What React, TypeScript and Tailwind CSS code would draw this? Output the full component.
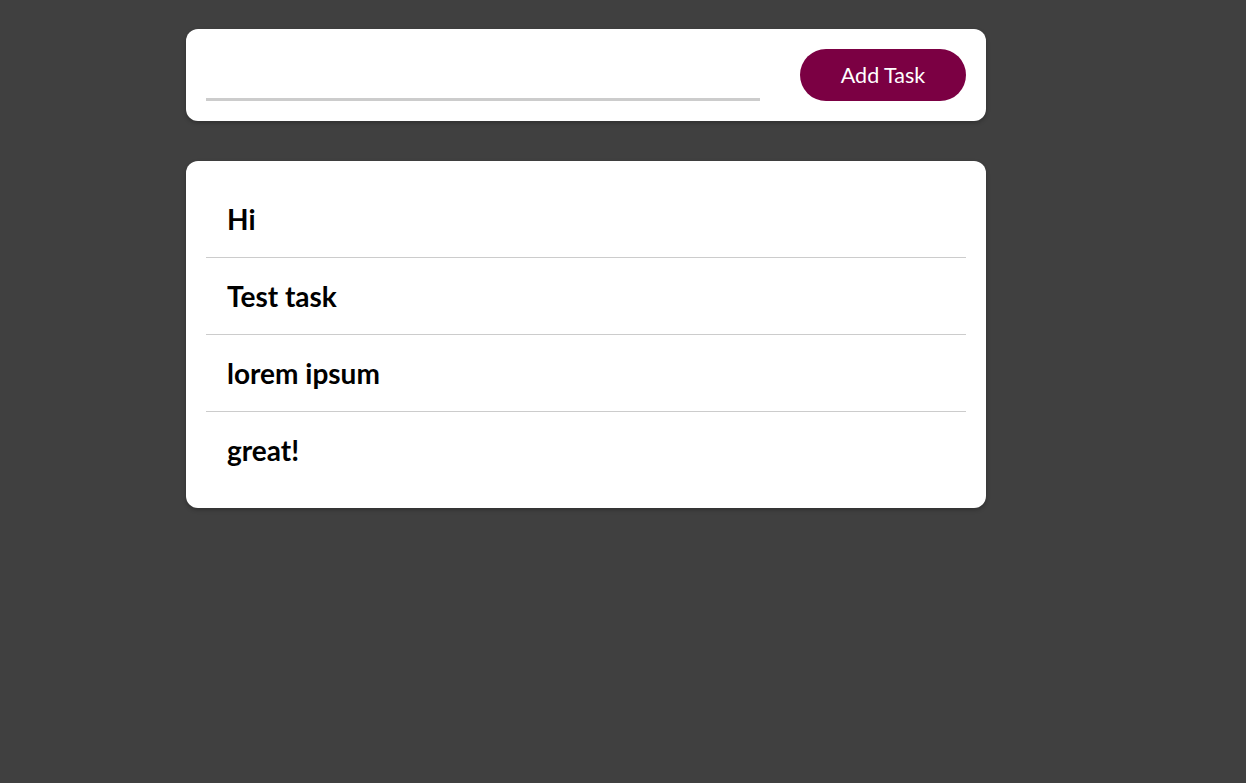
export default function App() {
    const tasks = ["Hi", "Test task", "lorem ipsum", "great!"];

    return (
        <div
            className="min-h-[783px] w-full bg-[#404040] pt-[29px]"
            style={{ fontFamily: "Lato, 'Noto Sans', sans-serif" }}
        >
            <div className="mx-auto w-[800px] -translate-x-[37px]">

                <div className="flex items-center justify-between rounded-xl bg-white p-5 shadow-[0_2px_4px_rgba(0,0,0,0.25)]">
                    <input
                        className="mt-[6px] h-[46px] w-[554px] border-b-[3px] border-[#cccccc] bg-transparent text-lg outline-none"
                        type="text"
                    />
                    <button className="h-[52px] w-[166px] rounded-full bg-[#7b0043] text-[21.5px] text-white">
                        Add Task
                    </button>
                </div>

                <div className="mt-10 rounded-xl bg-white px-5 py-5 shadow-[0_2px_4px_rgba(0,0,0,0.25)]">
                    <ul>
                        {tasks.map(task => (
                            <li
                                key={task}
                                className="flex h-[77px] items-center border-b border-[#cccccc] px-[21px] text-[28px] font-bold text-black last:h-[76px] last:border-b-0"
                            >
                                {task}
                            </li>
                        ))}
                    </ul>
                </div>

            </div>
        </div>
    );
}
